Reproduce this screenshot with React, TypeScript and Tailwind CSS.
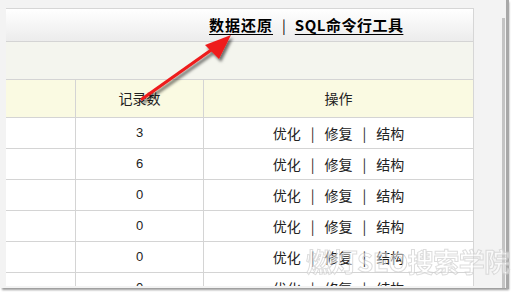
import React from "react";

const rows = ["3", "6", "0", "0", "0", "0"];

const cjk = "font-['Noto_Sans_CJK_SC','Noto_Sans',sans-serif]";

function Actions() {
  return (
    <div className="flex items-center gap-[10px]">
      <span>优化</span>
      <span>|</span>
      <span>修复</span>
      <span>|</span>
      <span>结构</span>
    </div>
  );
}

function Arrow() {
  return (
    <svg
      className="absolute left-0 top-0 pointer-events-none"
      width="512"
      height="293"
      viewBox="0 0 512 293"
    >
      <defs>
        <filter id="sh" x="-20%" y="-20%" width="140%" height="140%">
          <feDropShadow dx="2" dy="3" stdDeviation="1.6" floodColor="#000" floodOpacity="0.55" />
        </filter>
      </defs>
      <g filter="url(#sh)">
        <line x1="142" y1="99" x2="214" y2="48" stroke="#ee1c1c" strokeWidth="3.2" strokeLinecap="round" />
        <polygon points="231,35 205,45 219,59" fill="#ee1c1c" />
      </g>
    </svg>
  );
}

export default function App() {
  return (
    <div className={`relative w-[512px] h-[293px] overflow-hidden bg-white ${cjk}`}>
      <div className="flex w-[507px] h-[288px] bg-[#f3f3f3] shadow-[2px_2px_2px_#9a9a9a]">
        {/* main frame */}
        <div className="ml-[6px] mt-[8px] w-[468px] h-[278px] overflow-hidden bg-white border-t border-r border-[#d6d6d6]">
          <div className="flex items-center h-[33px] pl-[203px] bg-gradient-to-b from-white to-[#ececec] border-b border-[#d4d4d4] text-[15px] font-bold text-black">
            <span className="underline underline-offset-[3px] tracking-[1px]">数据还原</span>
            <span className="mx-[9px] font-normal text-[14px]">|</span>
            <span className="underline underline-offset-[3px] tracking-[0.5px]">SQL命令行工具</span>
          </div>
          <div className="h-[38px] bg-[#f4f5ee] border-b border-[#d4d4d4]" />
          <div className="flex h-[38px] bg-[#fafae2] border-b border-[#d4d4d4] text-[14px] text-[#222]">
            <div className="w-[69px]" />
            <div className="w-[128px] border-l border-[#d4d4d4] flex items-center justify-center">记录数</div>
            <div className="flex-1 border-l border-[#d4d4d4] flex items-center justify-center">操作</div>
          </div>
          {rows.map((n, i) => (
            <div key={i} className="flex h-[31px] border-b border-[#d4d4d4] text-[14px] text-[#222]">
              <div className="w-[69px]" />
              <div className="w-[128px] border-l border-[#d4d4d4] flex items-center justify-center font-['Liberation_Sans',sans-serif] text-[13px]">
                {n}
              </div>
              <div className="flex-1 border-l border-[#d4d4d4] flex items-center justify-center">
                <Actions />
              </div>
            </div>
          ))}
        </div>
        {/* scrollbar area */}
        <div className="flex-1 flex justify-end pt-[18px] pr-[2px]">
          <div className="w-[3px] h-full bg-[#c4c4c4]" />
        </div>
      </div>
      <div className="absolute left-[506px] top-0 w-[3px] h-[289px] bg-[#a8a8a8]" />
      <Arrow />
      <div className="absolute left-[306px] top-[248px] text-[26px] leading-none font-bold text-white/70 opacity-70 tracking-[-0.5px] [-webkit-text-stroke:1px_#cfcfcf]">
        燃灯SEO搜索学院
      </div>
    </div>
  );
}
